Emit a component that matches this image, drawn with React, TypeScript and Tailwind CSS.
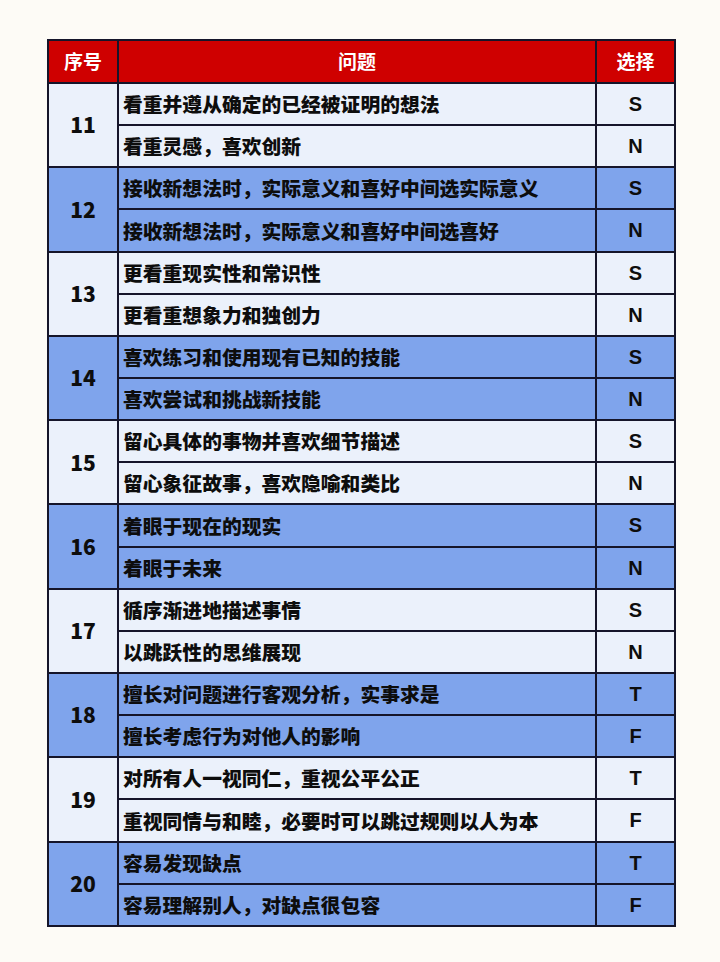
import React from 'react';

type Item = { no: number; rows: [string, string][] };

const data: Item[] = [
  { no: 11, rows: [['看重并遵从确定的已经被证明的想法', 'S'], ['看重灵感，喜欢创新', 'N']] },
  { no: 12, rows: [['接收新想法时，实际意义和喜好中间选实际意义', 'S'], ['接收新想法时，实际意义和喜好中间选喜好', 'N']] },
  { no: 13, rows: [['更看重现实性和常识性', 'S'], ['更看重想象力和独创力', 'N']] },
  { no: 14, rows: [['喜欢练习和使用现有已知的技能', 'S'], ['喜欢尝试和挑战新技能', 'N']] },
  { no: 15, rows: [['留心具体的事物并喜欢细节描述', 'S'], ['留心象征故事，喜欢隐喻和类比', 'N']] },
  { no: 16, rows: [['着眼于现在的现实', 'S'], ['着眼于未来', 'N']] },
  { no: 17, rows: [['循序渐进地描述事情', 'S'], ['以跳跃性的思维展现', 'N']] },
  { no: 18, rows: [['擅长对问题进行客观分析，实事求是', 'T'], ['擅长考虑行为对他人的影响', 'F']] },
  { no: 19, rows: [['对所有人一视同仁，重视公平公正', 'T'], ['重视同情与和睦，必要时可以跳过规则以人为本', 'F']] },
  { no: 20, rows: [['容易发现缺点', 'T'], ['容易理解别人，对缺点很包容', 'F']] },
];

const cell = 'border-2 border-[#15152a]';

export default function App() {
  return (
    <div className="w-[720px] h-[962px] bg-[#fdfbf6] pt-[39px] pl-[47px] font-['Noto_Sans_CJK_SC',sans-serif] font-black text-[#0d0d0d]">
      <table className="w-[627px] border-collapse table-fixed">
        <colgroup>
          <col className="w-[70px]" />
          <col className="w-[478px]" />
          <col className="w-[79px]" />
        </colgroup>
        <thead>
          <tr className="h-[43px] bg-[#cf0000] text-white text-[19px]">
            <th className={cell}>序号</th>
            <th className={cell}>问题</th>
            <th className={cell}>选择</th>
          </tr>
        </thead>
        <tbody>
          {data.map((item, i) => {
            const bg = i % 2 === 0 ? 'bg-[#ebf1fb]' : 'bg-[#7fa4ec]';
            return item.rows.map(([q, c], j) => (
              <tr key={`${item.no}-${j}`} className={`h-[42.15px] ${bg}`}>
                {j === 0 && (
                  <td rowSpan={2} className={`${cell} text-center text-[21px]`}>
                    {item.no}
                  </td>
                )}
                <td className={`${cell} pl-[4px] text-[19.8px] leading-none whitespace-nowrap`}>{q}</td>
                <td className={`${cell} text-center text-[20px] font-['Liberation_Sans',sans-serif] font-bold`}>{c}</td>
              </tr>
            ));
          })}
        </tbody>
      </table>
    </div>
  );
}
